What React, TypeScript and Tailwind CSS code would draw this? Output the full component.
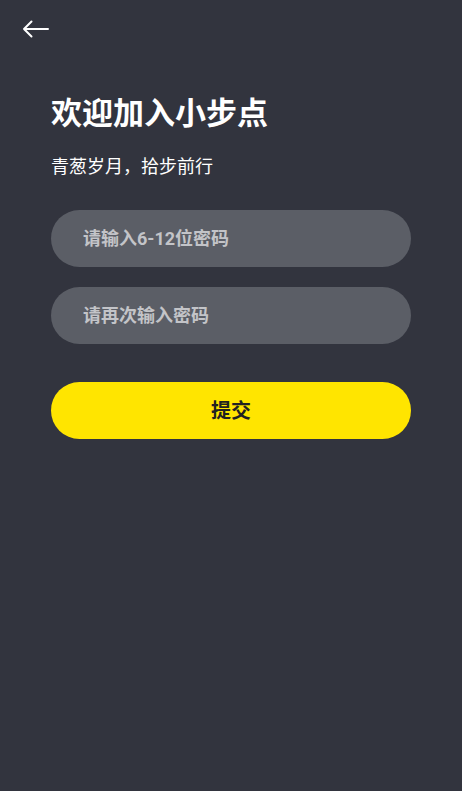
import { useState } from 'react';

export default function App() {
  const [pwd, setPwd] = useState('');
  const [pwd2, setPwd2] = useState('');

  return (
    <div
      className="min-h-[791px] w-full bg-[#32343e] text-white"
      style={{ fontFamily: 'Roboto, "Noto Sans CJK SC", "Noto Sans", sans-serif' }}
    >
      <div className="h-[58px] flex items-center pl-[22px]">
        <button className="p-0">
          <svg width="28" height="18" viewBox="0 0 28 18" fill="none" stroke="white" strokeWidth="2" strokeLinecap="round" strokeLinejoin="round">
            <path d="M26 9H2M9.5 1.5L2 9l7.5 7.5" />
          </svg>
        </button>
      </div>

      <div className="px-[51px] pt-[36px]">
        <h1 className="text-[31px] leading-[40px] font-bold">欢迎加入小步点</h1>
        <p className="mt-[20px] text-[18px] leading-[26px]">青葱岁月，拾步前行</p>

        <div className="mt-[30px] flex flex-col gap-[20px]">
          <input
            type="password"
            value={pwd}
            onChange={(e) => setPwd(e.target.value)}
            placeholder="请输入6-12位密码"
            className="h-[57px] w-full rounded-full bg-[#5b5e66] px-[32px] text-[18px] font-bold text-white outline-none placeholder:text-[#c3c4c8]"
          />
          <input
            type="password"
            value={pwd2}
            onChange={(e) => setPwd2(e.target.value)}
            placeholder="请再次输入密码"
            className="h-[57px] w-full rounded-full bg-[#5b5e66] px-[32px] text-[18px] font-bold text-white outline-none placeholder:text-[#c3c4c8]"
          />
        </div>

        <button className="mt-[38px] h-[57px] w-full rounded-full bg-[#ffe500] text-[20px] font-bold text-[#222222]">
          提交
        </button>
      </div>
    </div>
  );
}
